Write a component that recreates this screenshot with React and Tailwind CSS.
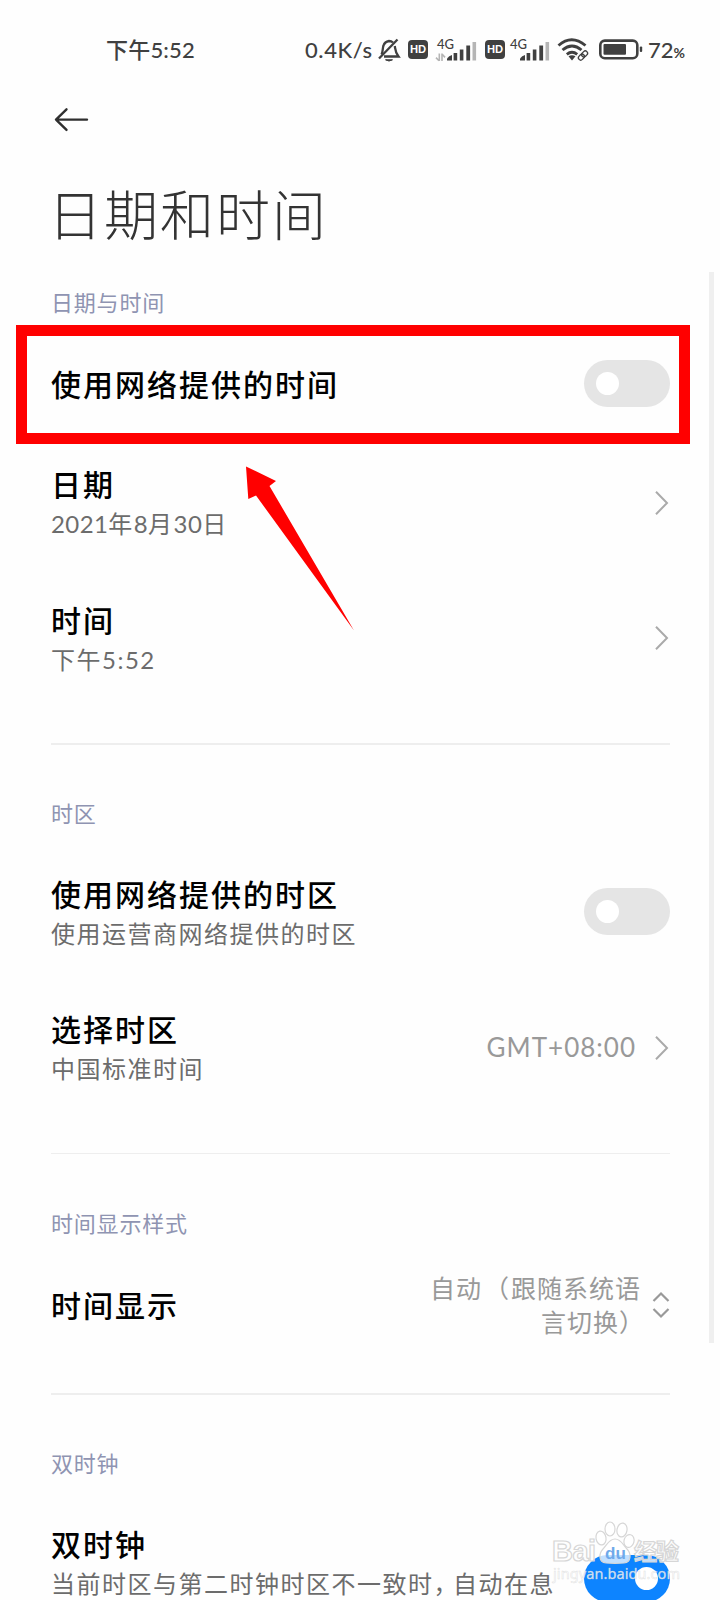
import { useState } from "react";

const SignalIcon = ({ showData }) => (
  <svg width="43" height="28" viewBox="0 0 43 28" className="shrink-0">
    <text x="2" y="13" fontSize="13" fontFamily="Lato, sans-serif" fontWeight="500" fill="#404040" textLength="17">4G</text>
    {showData && (
      <g stroke="#b5b5b5" strokeWidth="1.6" fill="none">
        <path d="M4.3 17.5v7.5M1 21.6l3 3.2" />
        <path d="M7 25v-7.5M7 18l3 3.4" />
      </g>
    )}
    <g fill="#404040">
      <path d="M12 24.5v-2q2-3 5-3.5v5.5z" />
      <rect x="18.6" y="17" width="3.6" height="7.5" />
      <rect x="24.8" y="13.5" width="3.6" height="11" />
      <rect x="31.3" y="9.5" width="3.8" height="15" />
    </g>
    <rect x="37.5" y="6" width="3.6" height="18.5" fill="#b5b5b5" />
  </svg>
);

const HdBadge = () => (
  <div className="flex h-[19px] w-[20px] shrink-0 items-center justify-center rounded-[4px] bg-[#404040] font-[Lato,sans-serif] text-[10.5px] leading-none font-black text-white">
    HD
  </div>
);

const StatusBar = () => (
  <div className="flex h-[100px] items-center pb-[1px] pl-[106px] text-[22px] font-medium text-[#404040]">
    <span className="w-[199px] tracking-[0.2px]">
      下午<span className="font-[Lato,'Noto_Sans_CJK_SC',sans-serif]">5:52</span>
    </span>
    <span className="w-[71px] whitespace-nowrap tracking-[0.6px]">0.4K/s</span>
    <svg width="26" height="26" viewBox="0 0 26 26" fill="none" stroke="#404040" strokeWidth="2.3" className="mr-[6px] shrink-0">
      <path d="M5.5 17.5C7 15 6.5 11 7.5 8.5 8.5 5.500 10.5 4.5 13 4c1.5 0 3 .6 4 1.5M18.8 9c.5 3 .2 6 3.7 10.5H8" />
      <path d="M3 21.5 21.5 2.5" />
      <path d="M9.5 22.8h7q-3.5 2.5-7 0z" fill="#404040" strokeWidth="1" />
    </svg>
    <HdBadge />
    <div className="ml-[7px]"><SignalIcon showData /></div>
    <div className="ml-[7px]"><HdBadge /></div>
    <div className="ml-[3px]"><SignalIcon /></div>
    {/* wifi with the link mark */}
    <svg width="33" height="26" viewBox="0 0 33 26" fill="none" stroke="#404040" className="ml-[6px] shrink-0">
      <path d="M1.5 8.5q13-11.5 27 0M5.5 13q9.5-8 19 0M9.8 17.3q5.2-4 10.4 0" strokeWidth="2.9" />
      <path d="M11.5 19.3q3.5-2.3 7 0L15 23.5z" fill="#404040" stroke="none" />
      <g strokeWidth="1.3" transform="rotate(-45 26 18.5)">
        <rect x="20.5" y="16.2" width="6.5" height="4.6" rx="2.3" />
        <rect x="25" y="16.2" width="6.5" height="4.6" rx="2.3" />
      </g>
    </svg>
    <svg width="44" height="21" viewBox="0 0 44 21" className="ml-[9px] shrink-0">
      <rect x="1.3" y="1.6" width="37" height="17.6" rx="4.5" fill="none" stroke="#404040" strokeWidth="2.6" />
      <rect x="4.5" y="5" width="22.5" height="10.8" rx="1" fill="#404040" />
      <rect x="40.8" y="7.5" width="2.4" height="5.5" rx="1" fill="#404040" />
    </svg>
    <span className="ml-[5px] font-[Lato,sans-serif] whitespace-nowrap">
      72<span className="text-[14px] font-bold">%</span>
    </span>
  </div>
);

const Toggle = ({ checked, onChange }) => (
  <button
    role="switch"
    aria-checked={checked}
    onClick={onChange}
    className={`mb-[2px] flex h-[47px] w-[86px] shrink-0 items-center rounded-full px-[12px] ${
      checked ? "justify-end bg-[#0d84ff]" : "justify-start bg-[#e5e5e5]"
    }`}
  >
    <span className="size-[23px] rounded-full bg-white" />
  </button>
);

const Chevron = () => (
  <svg width="15" height="26" viewBox="0 0 15 26" fill="none" stroke="#aaaaaa" strokeWidth="2" className="mr-px shrink-0">
    <path d="M2 1.8 13 13 2 24.2" />
  </svg>
);

const Section = ({ label, last, children }) => (
  <section>
    <h2 className="flex h-[60px] items-center pb-[2px] text-[22px] tracking-[0.8px] text-[#8f94b2]">{label}</h2>
    {children}
    {!last && <div className="mt-[37px] mb-[40px] h-[1.5px] bg-[#eeeeee]" />}
  </section>
);

const Row = ({ title, summary, children }) => (
  <div className={`flex items-center justify-between ${summary ? "h-[135.5px]" : "h-[102px]"}`}>
    <div className="flex flex-col">
      <h3 className="h-[39px] text-[30px] leading-[39px] font-medium tracking-[2px] whitespace-nowrap text-black">{title}</h3>
      {summary && (
        <p className="mt-[4px] text-[24px] leading-8 tracking-[1.5px] whitespace-nowrap text-[#6c6c6c]">{summary}</p>
      )}
    </div>
    <div className="flex items-center">{children}</div>
  </div>
);

// site mark in the bottom corner
const Watermark = () => (
  <svg width="140" height="70" viewBox="0 0 140 70" className="absolute top-[1518px] left-[548px]">
    <g fill="#ffffff" fillOpacity="0.75" stroke="#d6d6d6" strokeWidth="1.2">
      <ellipse cx="53" cy="20" rx="5" ry="7" transform="rotate(-10 53 20)" />
      <ellipse cx="62" cy="11" rx="5" ry="7" />
      <ellipse cx="74" cy="12" rx="5" ry="7" transform="rotate(10 74 12)" />
      <ellipse cx="81" cy="23" rx="5" ry="6.5" transform="rotate(15 81 23)" />
      <path d="M67 21c6 0 8 6 12 10s5 13-3 14c-6 .5-12 .5-18 0-8-1-7-10-3-14s6-10 12-10z" />
    </g>
    <g fill="#ffffff" fillOpacity="0.75" stroke="#d6d6d6" strokeWidth="1.2" fontWeight="700">
      <text x="4" y="43" fontSize="29" fontFamily="'Liberation Sans', sans-serif" textLength="44">Bai</text>
      <text x="86" y="42" fontSize="23" fontFamily="'Noto Sans CJK SC', sans-serif" textLength="45">经验</text>
    </g>
    <text x="57" y="41" fontSize="17" fontWeight="700" fontFamily="'Liberation Sans', sans-serif" fill="#6fa9ea" textLength="21">du</text>
    <text x="5" y="60.5" fontSize="14.5" fontFamily="'Noto Sans', sans-serif" fill="#ffffff" fillOpacity="0.8" stroke="#d3d3d3" strokeOpacity="0.7" strokeWidth="0.5" textLength="127">jingyan.baidu.com</text>
  </svg>
);

const App = () => {
  const [autoTime, setAutoTime] = useState(false);
  const [autoZone, setAutoZone] = useState(false);
  const [dualClock, setDualClock] = useState(true);

  return (
    <div className="relative h-[1600px] w-[720px] overflow-hidden bg-[#fefefe] font-[Lato,'Noto_Sans_CJK_SC',sans-serif]">
      <StatusBar />
      <header className="pl-[51px]">
        <svg width="40" height="40" viewBox="0 0 40 40" fill="none" stroke="#2f2f2f" strokeWidth="2.4" strokeLinecap="round" strokeLinejoin="round">
          <path d="M36 19.6H5M15.5 9.3 5 19.6l10.5 10.3" />
        </svg>
        <h1 className="mt-[36px] mb-[17px] -ml-[3px] h-[80px] text-[54px] leading-[80px] font-light tracking-[2px] text-[#333333]">日期和时间</h1>
      </header>

      <main className="pr-[50px] pl-[51px]">
        <Section label="日期与时间">
          <Row title="使用网络提供的时间">
            <Toggle checked={autoTime} onChange={() => setAutoTime(!autoTime)} />
          </Row>
          <Row
            title="日期"
            summary={
              <>
                <span className="tracking-[0.4px]">2021</span>年<span className="tracking-[0.4px]">8</span>月<span className="tracking-[0.4px]">30</span>日
              </>
            }
          >
            <Chevron />
          </Row>
          <Row title="时间" summary="下午5:52">
            <Chevron />
          </Row>
        </Section>

        <Section label="时区">
          <Row title="使用网络提供的时区" summary="使用运营商网络提供的时区">
            <Toggle checked={autoZone} onChange={() => setAutoZone(!autoZone)} />
          </Row>
          <Row title="选择时区" summary="中国标准时间">
            <span className="mr-[18px] text-[26px] tracking-[1px] text-[#999999]">GMT+08:00</span>
            <Chevron />
          </Row>
        </Section>

        <Section label="时间显示样式">
          <Row title="时间显示">
            <p className="mr-[11px] text-right text-[25px] leading-[34.5px] tracking-[1px] whitespace-nowrap text-[#999999]">
              自动<span className="ml-[2px] mr-px">（</span>跟随系统语
              <br />
              言切换<span className="tracking-[-3px]">）</span>
            </p>
            <svg width="18" height="28" viewBox="0 0 18 28" fill="none" stroke="#999999" strokeWidth="2.2">
              <path d="M1.5 10 9 2.5l7.5 7.5M1.5 18 9 25.5l7.5-7.5" />
            </svg>
          </Row>
        </Section>

        <Section label="双时钟" last>
          <div className="flex h-[167px] justify-between pt-[30px]">
            <div className="w-[520px]">
              <h3 className="h-[38px] text-[30px] leading-[38px] font-medium tracking-[2px] text-black">双时钟</h3>
              <p className="mt-[5px] text-[24px] leading-8 tracking-[1.5px] whitespace-nowrap text-[#6c6c6c]">
                当前时区与第二时钟时区不一致时<span className="tracking-[-4.5px]">，</span>自动在息
              </p>
            </div>
            <div className="mt-[30px]">
              <Toggle checked={dualClock} onChange={() => setDualClock(!dualClock)} />
            </div>
          </div>
        </Section>
      </main>

      {/* scrollbar */}
      <div className="absolute top-[272px] left-[709px] h-[1071px] w-[5px] bg-[#efefef]" />

      {/* highlight box and pointer */}
      <div className="pointer-events-none absolute top-[325px] left-[16px] h-[118.5px] w-[674px] border-[11px] border-[#ff0000]" />
      <svg width="110" height="166" viewBox="0 0 110 166" className="pointer-events-none absolute top-[466px] left-[246px]">
        <path d="M0 .5 30 15l-6.5 5L108 164.5 10 29.5 2.3 33z" fill="#ff0000" />
      </svg>

      <Watermark />
    </div>
  );
};

export default App;
